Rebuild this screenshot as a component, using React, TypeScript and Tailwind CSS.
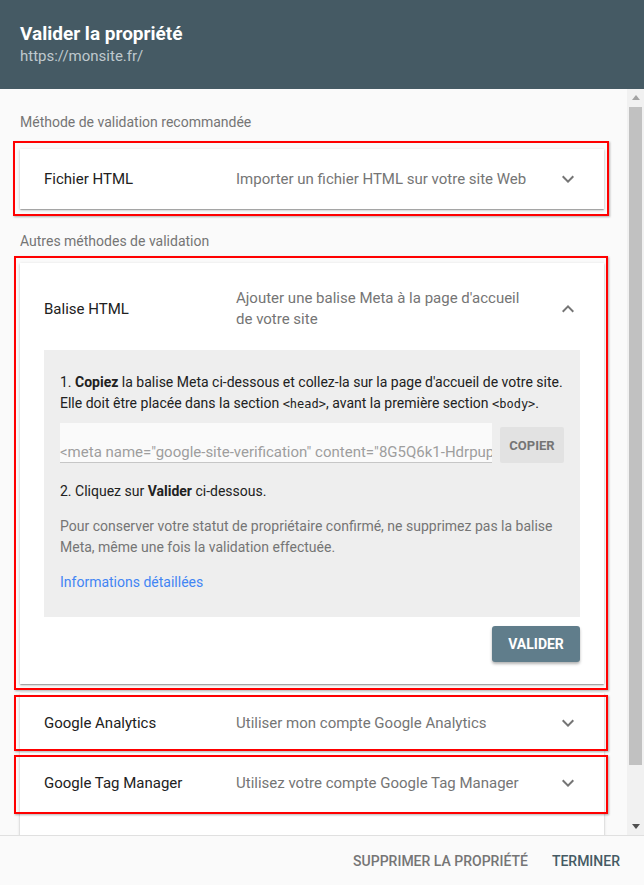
import React from "react";

const cardShadow =
  "shadow-[0_1px_3px_rgba(0,0,0,0.2),0_1px_1px_rgba(0,0,0,0.14),0_2px_1px_-1px_rgba(0,0,0,0.12)]";

function Chevron({ up = false }: { up?: boolean }) {
  return (
    <svg width="24" height="24" viewBox="0 0 24 24" fill="#757575">
      {up ? (
        <path d="M12 8l-6 6 1.41 1.41L12 10.83l4.59 4.58L18 14z" />
      ) : (
        <path d="M16.59 8.59L12 13.17 7.41 8.59 6 10l6 6 6-6z" />
      )}
    </svg>
  );
}

// red annotation box drawn over a card
function Mark({ className }: { className: string }) {
  return (
    <div
      className={`pointer-events-none absolute z-10 border-2 border-[#ff0000] shadow-[1px_1px_2px_rgba(0,0,0,0.3)] ${className}`}
    />
  );
}

function Panel({
  title,
  desc,
  mark,
  className = "",
}: {
  title: string;
  desc: string;
  mark?: string;
  className?: string;
}) {
  return (
    <div className={`relative bg-white ${cardShadow} ${className}`}>
      <div className="flex h-[60px] items-center px-6">
        <div className="w-[192px] text-[15px] text-[#212121]">{title}</div>
        <div className="w-[300px] text-[15px] text-[#757575]">{desc}</div>
        <div className="ml-auto">
          <Chevron />
        </div>
      </div>
      {mark && <Mark className={mark} />}
    </div>
  );
}

function Scrollbar() {
  return (
    <div className="flex w-[17px] flex-col bg-[#f1f1f1]">
      <div className="flex h-[17px] items-center justify-center">
        <svg width="8" height="5" viewBox="0 0 8 5">
          <path d="M4 0L8 5H0z" fill="#a3a3a3" />
        </svg>
      </div>
      <div className="flex-1 px-[2px]">
        <div className="mt-px h-[658px] bg-[#c1c1c1]" />
      </div>
      <div className="flex h-[17px] items-center justify-center">
        <svg width="8" height="5" viewBox="0 0 8 5">
          <path d="M0 0H8L4 5z" fill="#505050" />
        </svg>
      </div>
    </div>
  );
}

export default function App() {
  return (
    <div className="h-[885px] w-[644px] overflow-hidden bg-[#fafafa] font-['Roboto',sans-serif]">
      {/* header */}
      <div className="h-[89px] bg-[#455a64] px-5 pt-[22px]">
        <div className="text-[19px] font-bold leading-6 text-white">
          Valider la propriété
        </div>
        <div className="text-[15px] leading-5 text-[#bfc9ce]">
          https://monsite.fr/
        </div>
      </div>

      {/* body */}
      <div className="flex h-[746px]">
        <div className="flex-1 overflow-hidden pl-5 pr-[23px]">
          <p className="pt-[23px] text-[14px] leading-5 text-[#757575]">
            Méthode de validation recommandée
          </p>
          <Panel
            className="mt-[17px]"
            title="Fichier HTML"
            desc="Importer un fichier HTML sur votre site Web"
            mark="-top-[8px] -bottom-[7px] -left-[7px] -right-[5px]"
          />
          <p className="mt-[22px] text-[14px] leading-5 text-[#757575]">
            Autres méthodes de validation
          </p>

          {/* expanded panel */}
          <div className={`relative mt-3 bg-white ${cardShadow}`}>
            <div className="flex items-center px-6 pb-5 pt-[25px]">
              <div className="w-[192px] text-[15px] text-[#212121]">
                Balise HTML
              </div>
              <div className="w-[300px] text-[15px] leading-[21px] text-[#757575]">
                Ajouter une balise Meta à la page d'accueil de votre site
              </div>
              <div className="ml-auto">
                <Chevron up />
              </div>
            </div>
            <div className="mx-6 bg-[#eeeeee] px-4 pb-6 pt-[22px] text-[14px] leading-[21px] text-[#212121]">
              <p>
                1. <b>Copiez</b> la balise Meta ci-dessous et collez-la sur la
                page d'accueil de votre site. Elle doit être placée dans la
                section{" "}
                <span className="font-['DejaVu_Sans_Mono',monospace] text-[12px]">
                  &lt;head&gt;
                </span>
                , avant la première section{" "}
                <span className="font-['DejaVu_Sans_Mono',monospace] text-[12px]">
                  &lt;body&gt;
                </span>
                .
              </p>
              <div className="mt-2 flex items-end gap-2">
                <div className="flex h-10 flex-1 items-end overflow-hidden whitespace-nowrap border-b border-[#c6c6c6] bg-[#fafafa] text-[15px] leading-5 text-[#9e9e9e]">
                  &lt;meta name="google-site-verification"
                  content="8G5Q6k1-HdrpupXy3kVq0mWn7sLrT2bZcE9aFgH4jUo" /&gt;
                </div>
                <button className="h-9 w-16 rounded-[2px] bg-[#e2e2e2] text-[13px] font-bold text-[#757575]">
                  COPIER
                </button>
              </div>
              <p className="mt-[18px]">
                2. Cliquez sur <b>Valider</b> ci-dessous.
              </p>
              <p className="mt-[14px] text-[#757575]">
                Pour conserver votre statut de propriétaire confirmé, ne
                supprimez pas la balise Meta, même une fois la validation
                effectuée.
              </p>
              <p className="mt-[14px] text-[#4285f4]">Informations détaillées</p>
            </div>
            <div className="mx-6 mt-[9px] flex justify-end pb-[22px]">
              <button className="h-9 w-[88px] rounded-[3px] bg-[#607d8b] text-[14px] font-bold text-white shadow-[0_2px_3px_rgba(0,0,0,0.3)]">
                VALIDER
              </button>
            </div>
            <Mark className="-top-[7px] -bottom-[6px] -left-[6px] -right-[4px]" />
          </div>

          <Panel
            className="mt-[9px]"
            title="Google Analytics"
            desc="Utiliser mon compte Google Analytics"
            mark="top-[2px] bottom-[2px] -left-[6px] -right-[4px]"
          />
          <Panel
            title="Google Tag Manager"
            desc="Utilisez votre compte Google Tag Manager"
            mark="top-[2px] -bottom-[1px] -left-[6px] -right-[4px]"
          />
          <Panel title="" desc="" />
        </div>
        <Scrollbar />
      </div>

      {/* footer */}
      <div className="flex h-[50px] items-center justify-end gap-6 border-t border-[#e0e0e0] bg-[#fafafa] pr-6 pt-px text-[14px] font-medium">
        <span className="text-[#757575]">SUPPRIMER LA PROPRIÉTÉ</span>
        <span className="text-[#455a64]">TERMINER</span>
      </div>
    </div>
  );
}
